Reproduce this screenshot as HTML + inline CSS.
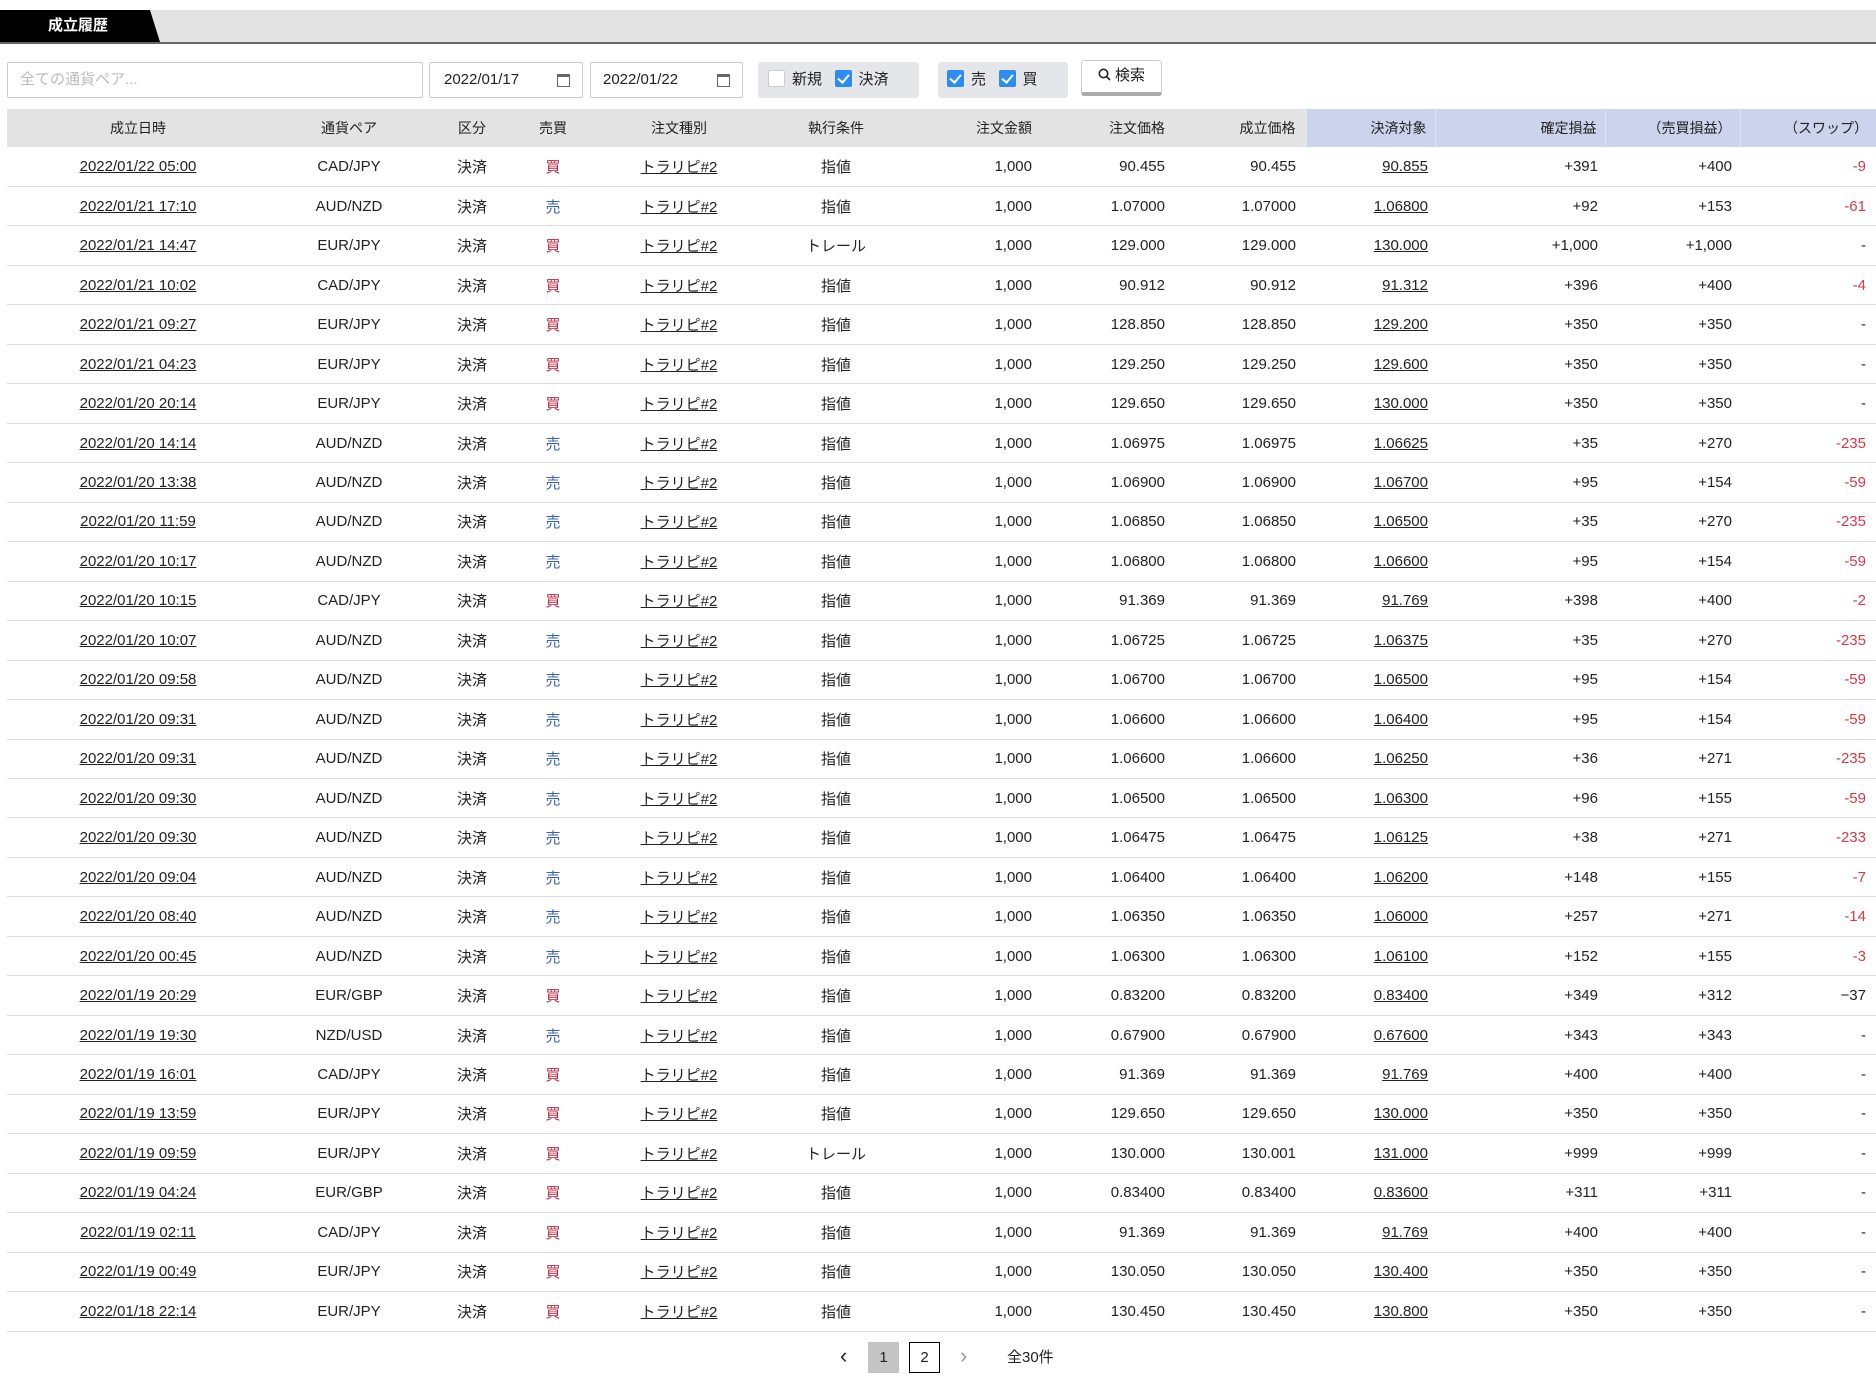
<!DOCTYPE html>
<html><head><meta charset="utf-8">
<style>
*{box-sizing:border-box;margin:0;padding:0}
body{width:1876px;height:1395px;background:#fff;font-family:"Liberation Sans","Noto Sans CJK JP",sans-serif;font-size:15px;color:#222;position:relative;overflow:hidden}
.tabbar{position:absolute;left:0;top:10px;width:1876px;height:34px;background:#e3e3e3;border-bottom:2px solid #666}
.tab{position:absolute;left:0;top:0;width:160px;height:32px;background:#000;clip-path:polygon(0 0,150px 0,160px 32px,0 32px);color:#fff;font-weight:bold;font-size:15px;line-height:32px;padding-left:48px}
.box{position:absolute;top:62px;height:36px;border:1px solid #ccc;border-radius:2px;background:#fff;line-height:34px}
.grp{position:absolute;top:62px;height:36px;background:#e4e6ea;border-radius:3px;line-height:36px;font-size:15px}
.cb{display:inline-block;width:17px;height:17px;border-radius:2px;vertical-align:-3px;margin-right:7px;position:relative}
.cb.on{background:#2d8cf0}
.cb.on:after{content:"";position:absolute;left:5px;top:2px;width:5px;height:9px;border:solid #fff;border-width:0 2px 2px 0;transform:rotate(40deg)}
.cb.off{background:#fff;border:1px solid #ccc}
.cal{position:absolute;right:12px;top:11px;width:13px;height:13px;border:1px solid #666;border-top-width:3px}
table{position:absolute;left:7px;top:109px;width:1869px;border-collapse:collapse;table-layout:fixed}
th{height:38px;background:#e3e3e3;font-weight:normal;font-size:14px}
th.b{background:#ccd3ed;border-left:1px solid #e0e4f4}
td{height:39.47px;border-bottom:1px solid #ddd;font-size:15px;white-space:nowrap}
.c{text-align:center}.r{text-align:right}
u{text-decoration:underline}
.s{color:#3a63b0}.k{color:#b8283f}.n{color:#d43a4a}
</style></head><body>
<div class="tabbar"><div class="tab">成立履歴</div></div>
<div class="box" style="left:7px;width:416px;color:#bbb;padding-left:12px">全ての通貨ペア...</div>
<div class="box" style="left:429px;width:154px;padding-left:14px">2022/01/17<span class="cal"></span></div>
<div class="box" style="left:590px;width:153px;padding-left:12px">2022/01/22<span class="cal"></span></div>
<div class="grp" style="left:758px;width:161px;padding-left:10px"><span class="cb off"></span>新規 &nbsp;&nbsp;<span class="cb on"></span>決済</div>
<div class="grp" style="left:938px;width:130px;padding-left:9px"><span class="cb on"></span>売 &nbsp;&nbsp;<span class="cb on"></span>買</div>
<div style="position:absolute;left:1081px;top:60px;width:81px;height:36px;border:1px solid #ccc;border-bottom:4px solid #aaa;border-radius:3px;background:#fff;text-align:center;line-height:30px;font-size:15px"><svg width="13" height="13" viewBox="0 0 13 13" style="vertical-align:-1px;margin-right:4px"><circle cx="5.5" cy="5.5" r="4.2" fill="none" stroke="#222" stroke-width="1.6"/><path d="M8.5 8.5L12 12" stroke="#222" stroke-width="1.6"/></svg>検索</div>
<table>
<colgroup><col style="width:262px"><col style="width:160px"><col style="width:86px"><col style="width:76px"><col style="width:176px"><col style="width:138px"><col style="width:137px"><col style="width:133px"><col style="width:131px"><col style="width:129px"><col style="width:170px"><col style="width:135px"><col style="width:136px"></colgroup>
<tr><th class="c">成立日時</th><th class="c">通貨ペア</th><th class="c">区分</th><th class="c">売買</th><th class="c">注文種別</th><th class="c">執行条件</th><th class="r" style="padding-right:10px">注文金額</th><th class="r" style="padding-right:10px">注文価格</th><th class="r" style="padding-right:10px">成立価格</th><th class="r b" style="padding-right:8px">決済対象</th><th class="r b" style="padding-right:8px">確定損益</th><th class="r b" style="padding-right:8px">（売買損益）</th><th class="r b" style="padding-right:8px">（スワップ）</th></tr>
<tbody id="tb"></tbody>
</table>
<script>
var d=[["2022/01/22 05:00","CAD/JPY","買","指値","90.455","90.855","+391","+400","-9"],
["2022/01/21 17:10","AUD/NZD","売","指値","1.07000","1.06800","+92","+153","-61"],
["2022/01/21 14:47","EUR/JPY","買","トレール","129.000","130.000","+1,000","+1,000","-"],
["2022/01/21 10:02","CAD/JPY","買","指値","90.912","91.312","+396","+400","-4"],
["2022/01/21 09:27","EUR/JPY","買","指値","128.850","129.200","+350","+350","-"],
["2022/01/21 04:23","EUR/JPY","買","指値","129.250","129.600","+350","+350","-"],
["2022/01/20 20:14","EUR/JPY","買","指値","129.650","130.000","+350","+350","-"],
["2022/01/20 14:14","AUD/NZD","売","指値","1.06975","1.06625","+35","+270","-235"],
["2022/01/20 13:38","AUD/NZD","売","指値","1.06900","1.06700","+95","+154","-59"],
["2022/01/20 11:59","AUD/NZD","売","指値","1.06850","1.06500","+35","+270","-235"],
["2022/01/20 10:17","AUD/NZD","売","指値","1.06800","1.06600","+95","+154","-59"],
["2022/01/20 10:15","CAD/JPY","買","指値","91.369","91.769","+398","+400","-2"],
["2022/01/20 10:07","AUD/NZD","売","指値","1.06725","1.06375","+35","+270","-235"],
["2022/01/20 09:58","AUD/NZD","売","指値","1.06700","1.06500","+95","+154","-59"],
["2022/01/20 09:31","AUD/NZD","売","指値","1.06600","1.06400","+95","+154","-59"],
["2022/01/20 09:31","AUD/NZD","売","指値","1.06600","1.06250","+36","+271","-235"],
["2022/01/20 09:30","AUD/NZD","売","指値","1.06500","1.06300","+96","+155","-59"],
["2022/01/20 09:30","AUD/NZD","売","指値","1.06475","1.06125","+38","+271","-233"],
["2022/01/20 09:04","AUD/NZD","売","指値","1.06400","1.06200","+148","+155","-7"],
["2022/01/20 08:40","AUD/NZD","売","指値","1.06350","1.06000","+257","+271","-14"],
["2022/01/20 00:45","AUD/NZD","売","指値","1.06300","1.06100","+152","+155","-3"],
["2022/01/19 20:29","EUR/GBP","買","指値","0.83200","0.83400","+349","+312","−37"],
["2022/01/19 19:30","NZD/USD","売","指値","0.67900","0.67600","+343","+343","-"],
["2022/01/19 16:01","CAD/JPY","買","指値","91.369","91.769","+400","+400","-"],
["2022/01/19 13:59","EUR/JPY","買","指値","129.650","130.000","+350","+350","-"],
["2022/01/19 09:59","EUR/JPY","買","トレール","130.000","131.000","+999","+999","-"],
["2022/01/19 04:24","EUR/GBP","買","指値","0.83400","0.83600","+311","+311","-"],
["2022/01/19 02:11","CAD/JPY","買","指値","91.369","91.769","+400","+400","-"],
["2022/01/19 00:49","EUR/JPY","買","指値","130.050","130.400","+350","+350","-"],
["2022/01/18 22:14","EUR/JPY","買","指値","130.450","130.800","+350","+350","-"]];
var h="";d.forEach(function(r,i){var p=r[4];if(i==25)p="130.001";
var sw=r[8];var swc=(sw!="-"&&sw!="−37")?"n":"";
h+='<tr><td class="c"><u>'+r[0]+'</u></td><td class="c">'+r[1]+'</td><td class="c">決済</td><td class="c '+(r[2]=="売"?"s":"k")+'">'+r[2]+'</td><td class="c"><u>トラリピ#2</u></td><td class="c">'+r[3]+'</td><td class="r" style="padding-right:10px">1,000</td><td class="r" style="padding-right:10px">'+r[4]+'</td><td class="r" style="padding-right:10px">'+p+'</td><td class="r" style="padding-right:7px"><u>'+r[5]+'</u></td><td class="r" style="padding-right:7px">'+r[6]+'</td><td class="r" style="padding-right:8px">'+r[7]+'</td><td class="r '+swc+'" style="padding-right:10px">'+sw+'</td></tr>';});
document.getElementById("tb").innerHTML=h;
</script>
<div style="position:absolute;left:840px;top:1343px;font-size:22px;line-height:26px">&#8249;</div>
<div style="position:absolute;left:868px;top:1342px;width:31px;height:31px;background:#c4c4c4;text-align:center;line-height:31px">1</div>
<div style="position:absolute;left:909px;top:1342px;width:31px;height:31px;border:1px solid #000;text-align:center;line-height:29px">2</div>
<div style="position:absolute;left:960px;top:1343px;font-size:22px;line-height:26px;color:#999">&#8250;</div>
<div style="position:absolute;left:1007px;top:1342px;line-height:31px">全30件</div>
</body></html>
